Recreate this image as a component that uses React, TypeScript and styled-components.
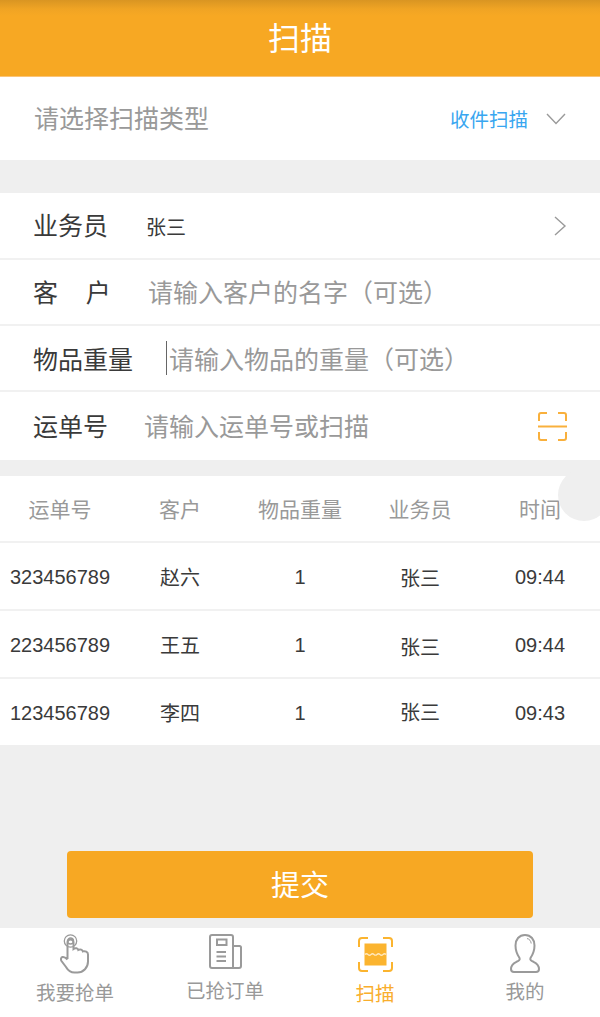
import styled, { createGlobalStyle } from 'styled-components';

const GlobalStyle = createGlobalStyle`
  html, body {
    margin: 0;
    padding: 0;
    background: #efefef;
  }
  * {
    box-sizing: border-box;
  }
  body {
    font-family: "Liberation Sans", "Noto Sans CJK SC", sans-serif;
  }
`;

const Page = styled.div`
  position: relative;
  width: 600px;
  height: 1017px;
  display: flex;
  flex-direction: column;
  background: #efefef;
  overflow: hidden;
`;

const Header = styled.header`
  height: 77px;
  flex: none;
  display: flex;
  align-items: center;
  justify-content: center;
  padding-bottom: 5px;
  background: linear-gradient(180deg, #d99522 0, #f0a424 9px, #f7a823 16px);
  border-bottom: 1px solid #fbc477;
  color: #ffffff;
  font-size: 32px;
`;

const TypeRow = styled.div`
  height: 83px;
  flex: none;
  display: flex;
  align-items: center;
  justify-content: space-between;
  padding: 0 34px;
  background: #ffffff;
  font-size: 25px;
  color: #999999;
`;

const TypeTitle = styled.span`
  padding-bottom: 3px;
`;

const TypeValue = styled.div`
  display: flex;
  align-items: center;
  gap: 18px;
  font-size: 19.5px;
  color: #38a6f0;
`;

const Form = styled.section`
  margin-top: 33px;
  flex: none;
  background: #ffffff;
`;

const FormRow = styled.div<{ $h: number; $last?: boolean }>`
  height: ${({ $h }) => $h}px;
  display: flex;
  align-items: center;
  padding: 0 33px;
  border-bottom: ${({ $last }) => ($last ? 'none' : '2px solid #f1f1f1')};
`;

const Label = styled.span<{ $w: number; $drop?: number }>`
  flex: none;
  width: ${({ $w }) => $w}px;
  margin-top: ${({ $drop }) => $drop ?? 0}px;
  font-size: 25px;
  line-height: 34px;
  color: #3a3a3a;
  white-space: pre;
`;

const Person = styled.span`
  flex: 1;
  font-size: 20px;
  color: #3a3a3a;
  padding-top: 1px;
`;

const Field = styled.input<{ $drop?: number }>`
  flex: 1;
  min-width: 0;
  height: 36px;
  padding: ${({ $drop }) => $drop ?? 0}px 0 0;
  border: none;
  outline: none;
  background: transparent;
  font: inherit;
  font-size: 25px;
  color: #3a3a3a;

  &::placeholder {
    color: #999999;
    opacity: 1;
  }
`;

const Caret = styled.span`
  flex: none;
  width: 1px;
  height: 34px;
  margin-right: 2px;
  background: #666666;
`;

const Table = styled.section`
  margin-top: 16px;
  flex: none;
  background: #ffffff;
`;

const TableRow = styled.div<{ $h: number; $last?: boolean }>`
  height: ${({ $h }) => $h}px;
  display: grid;
  grid-template-columns: repeat(5, 120px);
  align-items: center;
  border-bottom: ${({ $last }) => ($last ? 'none' : '2px solid #f1f1f1')};
`;

const HeadCell = styled.span`
  text-align: center;
  font-size: 21px;
  color: #999999;
  padding-bottom: 2px;
`;

const Cell = styled.span<{ $shift?: number }>`
  text-align: center;
  font-size: 20px;
  color: #3a3a3a;
  margin-top: ${({ $shift }) => $shift ?? 0}px;
`;

const FloatBall = styled.div`
  position: absolute;
  left: 558px;
  top: 469px;
  width: 52px;
  height: 52px;
  border-radius: 50%;
  background: #efefef;
`;

const Footer = styled.div`
  flex: 1;
  display: flex;
  align-items: flex-end;
  justify-content: center;
  padding-bottom: 10px;
`;

const SubmitButton = styled.button`
  width: 466px;
  height: 67px;
  padding: 0 0 4px;
  border: none;
  border-radius: 4px;
  background: #f7a823;
  color: #ffffff;
  font: inherit;
  font-size: 29px;
`;

const TabBar = styled.nav`
  height: 89px;
  flex: none;
  display: grid;
  grid-template-columns: repeat(4, 150px);
  background: #ffffff;
`;

const Tab = styled.div<{ $pad: number; $gap: number; $active?: boolean }>`
  display: flex;
  flex-direction: column;
  align-items: center;
  gap: ${({ $gap }) => $gap}px;
  padding-top: ${({ $pad }) => $pad}px;
  font-size: 19.5px;
  line-height: 20px;
  color: ${({ $active }) => ($active ? '#f9ae2d' : '#999999')};

  svg {
    display: block;
  }
`;

const ORANGE = '#f9b03c';
const GREY = '#9a9a9a';

function ChevronDown() {
  return (
    <svg width="20" height="12" viewBox="0 0 20 12" fill="none" stroke="#9a9a9a" strokeWidth="1.4">
      <path d="M1 1l9 9.500L19 1" />
    </svg>
  );
}

function ChevronRight() {
  return (
    <svg width="14" height="20" viewBox="0 0 14 20" fill="none" stroke="#9a9a9a" strokeWidth="1.4">
      <path d="M2 1l10 9-10 9" />
    </svg>
  );
}

function ScanSmall() {
  return (
    <svg width="29" height="29" viewBox="0 0 29 29" fill="none" stroke={ORANGE} strokeWidth="2">
      <path d="M9 1H3a2 2 0 0 0-2 2v6M20 1h6a2 2 0 0 1 2 2v6M1 20v6a2 2 0 0 0 2 2h6M28 20v6a2 2 0 0 1-2 2h-6" />
      <path d="M0 14.500h29" />
    </svg>
  );
}

function HandIcon() {
  return (
    <svg width="30" height="40" viewBox="0 0 30 40" fill="none" stroke={GREY} strokeWidth="2">
      <circle cx="10.500" cy="7" r="6.200" strokeWidth="1.300" />
      <circle cx="10.500" cy="7" r="3" strokeWidth="1.300" />
      <path d="M7.500 25V8.500a3 3 0 0 1 6 0V15c2-1.600 4.400-.6 4.800 1 2-1.200 4.200-.2 4.600 1.400 2.200-.8 5.100.4 5.100 3.100v7c0 6-4.500 11-10.500 11h-3c-4 0-6.500-2-8.500-5.500L1.500 27c-1-1.800-.5-3.500 1-4s3.500 1 5 2.500" />
    </svg>
  );
}

function DocIcon() {
  return (
    <svg width="33" height="35" viewBox="0 0 33 35" fill="none" stroke={GREY} strokeWidth="2">
      <path d="M24 12h6.500a1.500 1.500 0 0 1 1.500 1.500V32a2 2 0 0 1-2 2H3a2 2 0 0 1-2-2V3a2 2 0 0 1 2-2h19a2 2 0 0 1 2 2v31" />
      <rect x="8" y="5.500" width="9.500" height="5.500" />
      <path d="M7.500 18h9.500M7.500 22.500h9.500M7.500 27h9.500" />
    </svg>
  );
}

function ScanTabIcon() {
  return (
    <svg width="35" height="35" viewBox="0 0 35 35" fill="none" stroke="#fbb42f" strokeWidth="2">
      <path d="M10 1H4a3 3 0 0 0-3 3v6M25 1h6a3 3 0 0 1 3 3v6M1 25v6a3 3 0 0 0 3 3h6M34 25v6a3 3 0 0 1-3 3h-6" />
      <rect x="6.500" y="6.500" width="22" height="22" fill="#fbb42f" stroke="none" />
      <path d="M7 17.500q1.500-1.500 3 0t3 0 3 0 3 0 3 0 3 0 3 0" stroke="#ffe9c0" strokeWidth="1.200" />
    </svg>
  );
}

function PersonIcon() {
  return (
    <svg width="30" height="39" viewBox="0 0 30 39" fill="none" stroke={GREY} strokeWidth="2">
      <path d="M15 1c-6 0-9.500 4.500-9.500 10.500 0 5 2 9.500 4 12.500.8 1.500-.5 2.800-3 3.800C3 29.500 1 32 1 35c0 2 1 3 3 3h22c2 0 3-1 3-3 0-3-2-5.500-5.500-7.200-2.500-1-3.800-2.300-3-3.800 2-3 4-7.500 4-12.500C24.500 5.500 21 1 15 1z" />
      <path d="M17 4.500c2.500.5 4 2.500 4.200 5" strokeWidth="1" />
    </svg>
  );
}

const records = [
  { no: '323456789', customer: '赵六', weight: '1', staff: '张三', time: '09:44', shift: 2, h: 68 },
  { no: '223456789', customer: '王五', weight: '1', staff: '张三', time: '09:44', shift: 4, h: 68 },
  { no: '123456789', customer: '李四', weight: '1', staff: '张三', time: '09:43', shift: -2, h: 66 },
];

export default function App() {
  return (
    <Page>
      <GlobalStyle />
      <Header>扫描</Header>

      <TypeRow>
        <TypeTitle>请选择扫描类型</TypeTitle>
        <TypeValue>
          收件扫描
          <ChevronDown />
        </TypeValue>
      </TypeRow>

      <Form>
        <FormRow $h={67}>
          <Label $w={113}>业务员</Label>
          <Person>张三</Person>
          <ChevronRight />
        </FormRow>
        <FormRow $h={66}>
          <Label $w={115} $drop={2}>{'客    户'}</Label>
          <Field $drop={3} placeholder="请输入客户的名字（可选）" readOnly />
        </FormRow>
        <FormRow $h={66}>
          <Label $w={133} $drop={4}>物品重量</Label>
          <Caret />
          <Field $drop={5} placeholder="请输入物品的重量（可选）" readOnly />
        </FormRow>
        <FormRow $h={68} $last>
          <Label $w={111} $drop={2}>运单号</Label>
          <Field $drop={2} placeholder="请输入运单号或扫描" readOnly />
          <ScanSmall />
        </FormRow>
      </Form>

      <Table>
        <TableRow $h={67}>
          <HeadCell>运单号</HeadCell>
          <HeadCell>客户</HeadCell>
          <HeadCell>物品重量</HeadCell>
          <HeadCell>业务员</HeadCell>
          <HeadCell>时间</HeadCell>
        </TableRow>
        {records.map((r, i) => (
          <TableRow key={r.no} $h={r.h} $last={i === records.length - 1}>
            <Cell $shift={2}>{r.no}</Cell>
            <Cell>{r.customer}</Cell>
            <Cell $shift={2}>{r.weight}</Cell>
            <Cell $shift={r.shift}>{r.staff}</Cell>
            <Cell $shift={2}>{r.time}</Cell>
          </TableRow>
        ))}
      </Table>
      <FloatBall />

      <Footer>
        <SubmitButton>提交</SubmitButton>
      </Footer>

      <TabBar>
        <Tab $pad={6} $gap={9}>
          <HandIcon />
          <span>我要抢单</span>
        </Tab>
        <Tab $pad={6} $gap={12}>
          <DocIcon />
          <span>已抢订单</span>
        </Tab>
        <Tab $pad={9} $gap={12} $active>
          <ScanTabIcon />
          <span>扫描</span>
        </Tab>
        <Tab $pad={6} $gap={9}>
          <PersonIcon />
          <span>我的</span>
        </Tab>
      </TabBar>
    </Page>
  );
}
